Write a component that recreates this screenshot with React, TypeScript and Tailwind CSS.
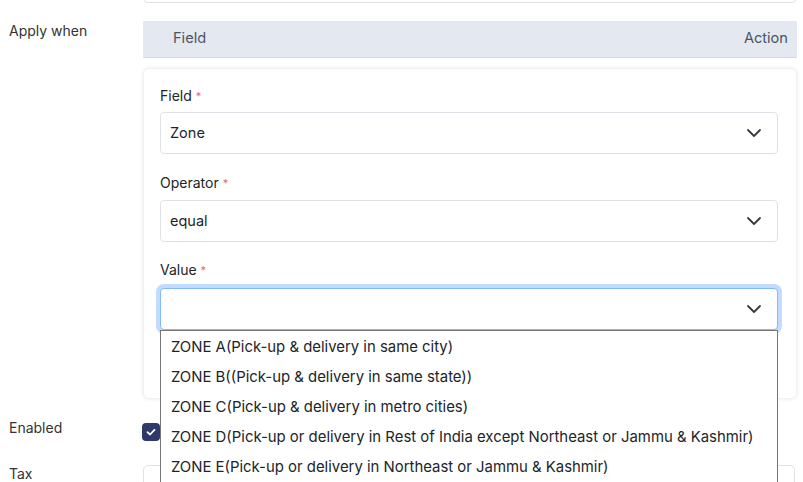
import React from "react";

const Chevron = () => (
  <svg width="16" height="16" viewBox="0 0 16 16" fill="none" className="shrink-0">
    <path d="m2 5 6 6 6-6" stroke="#343a40" strokeWidth="1.8" strokeLinecap="round" strokeLinejoin="round" />
  </svg>
);

const Label = ({ text }: { text: string }) => (
  <div className="h-[20px] text-[14px] leading-[20px] text-[#212529]">
    {text} <span className="text-[#e06c75] text-[11px] align-top">*</span>
  </div>
);

const Select = ({ value, focused }: { value?: string; focused?: boolean }) => (
  <div
    className={
      focused
        ? "h-[42px] rounded-[4px] border border-[#86b7fe] shadow-[0_0_0_4px_rgba(13,110,253,0.25)] bg-white flex items-center justify-between pl-[9px] pr-[15px]"
        : "h-[42px] rounded-[4px] border border-[#dee2e6] bg-white flex items-center justify-between pl-[9px] pr-[15px]"
    }
  >
    <span className="text-[14.5px] text-[#212529]">{value}</span>
    <Chevron />
  </div>
);

const options = [
  "ZONE A(Pick-up & delivery in same city)",
  "ZONE B((Pick-up & delivery in same state))",
  "ZONE C(Pick-up & delivery in metro cities)",
  "ZONE D(Pick-up or delivery in Rest of India except Northeast or Jammu & Kashmir)",
  "ZONE E(Pick-up or delivery in Northeast or Jammu & Kashmir)",
];

export default function App() {
  return (
    <div className="w-[803px] h-[482px] overflow-hidden bg-white font-['Inter',sans-serif] text-[#333]">
      {/* top input (scrolled) */}
      <div className="flex">
        <div className="w-[143px]" />
        <div className="w-[654px] h-[40px] -mt-[37px] border border-[#dee2e6] rounded-[5px]" />
      </div>

      {/* Apply when */}
      <div className="flex mt-[18px]">
        <div className="w-[143px] pl-[9px] text-[14px] leading-[20px] text-[#333]">Apply when</div>
        <div className="w-[654px] flex flex-col">
          <div className="h-[37px] bg-[#e4e8f0] border-b border-[#d5dae3] flex items-center justify-between pl-[30px] pr-[9px] pb-[1px] text-[14.6px] text-[#4a5563]">
            <span>Field</span>
            <span>Action</span>
          </div>
          <div className="mt-[10px] h-[331px] rounded-[6px] bg-white shadow-[0_0_4px_rgba(0,0,0,0.08)] border border-[#f1f1f1] pl-[16px] pr-[18px] pt-[17px] flex flex-col">
            <div className="flex flex-col gap-[6px]">
              <Label text="Field" />
              <Select value="Zone" />
            </div>
            <div className="flex flex-col gap-[7px] mt-[19px]">
              <Label text="Operator" />
              <Select value="equal" />
            </div>
            <div className="flex flex-col gap-[8px] mt-[18px]">
              <Label text="Value" />
              <div className="relative">
                <Select focused />
                <div className="absolute left-0 right-0 top-full z-10 bg-white border border-[#767676] pt-[1px] flex flex-col">
                  {options.map((o) => (
                    <div key={o} className="h-[30px] flex items-center pl-[10px] text-[14.9px] text-[#212529] whitespace-nowrap">
                      {o}
                    </div>
                  ))}
                </div>
              </div>
            </div>
          </div>
        </div>
      </div>

      {/* Enabled */}
      <div className="flex mt-[19px]">
        <div className="w-[142px] pl-[9px] text-[14px] leading-[20px] text-[#333]">Enabled</div>
        <div className="mt-[5px] w-[18px] h-[18px] rounded-[4px] bg-[#2f3a6c] flex items-center justify-center">
          <svg width="12" height="12" viewBox="0 0 12 12" fill="none">
            <path d="M2.5 6.2 5 8.5 9.5 3.8" stroke="white" strokeWidth="1.8" strokeLinecap="round" strokeLinejoin="round" />
          </svg>
        </div>
      </div>

      {/* Tax */}
      <div className="flex mt-[23px]">
        <div className="w-[143px] pl-[9px] text-[14px] leading-[20px] text-[#333]">Tax</div>
        <div className="w-[652px] h-[40px] mt-[1px] border border-[#dee2e6] rounded-[5px]" />
      </div>
    </div>
  );
}
